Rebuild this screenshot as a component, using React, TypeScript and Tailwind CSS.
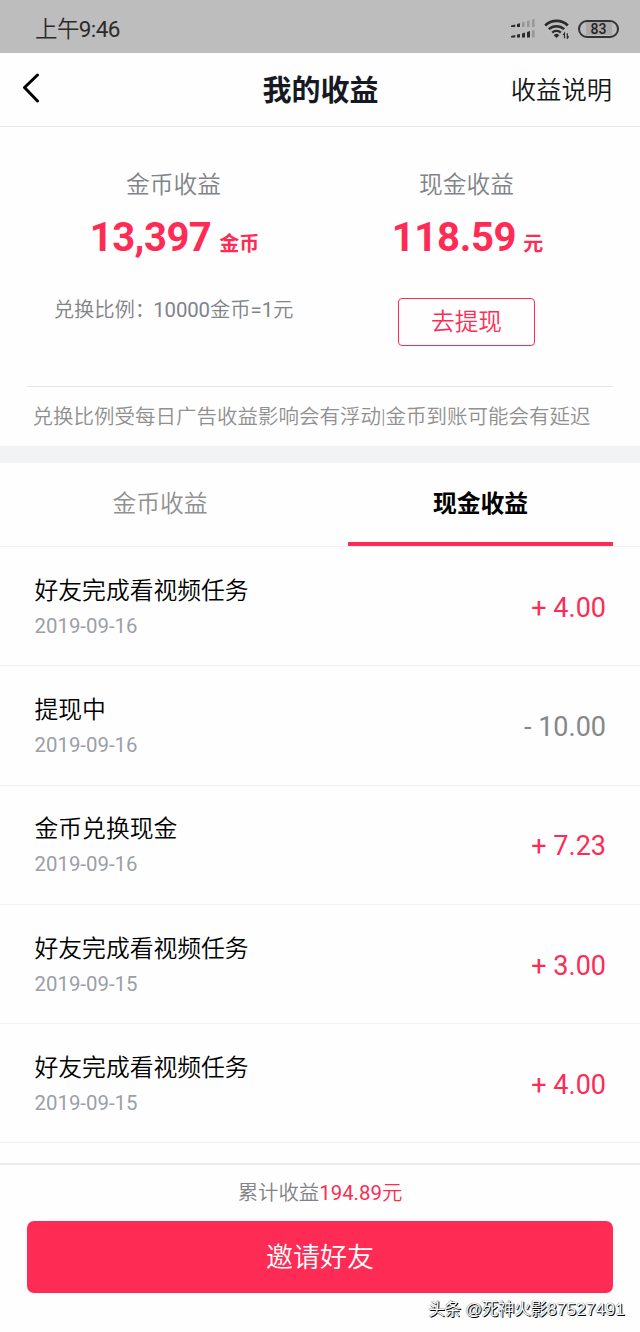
const records = [
  { title: "好友完成看视频任务", date: "2019-09-16", amount: "+ 4.00" },
  { title: "提现中", date: "2019-09-16", amount: "- 10.00" },
  { title: "金币兑换现金", date: "2019-09-16", amount: "+ 7.23" },
  { title: "好友完成看视频任务", date: "2019-09-15", amount: "+ 3.00" },
  { title: "好友完成看视频任务", date: "2019-09-15", amount: "+ 4.00" },
];

function SignalIcon() {
  return (
    <svg width="26" height="20" viewBox="0 0 26 20">
      <g fill="#2b2b2b">
        <path d="M1 6.4 5.2 5.4V8H1z" />
        <path d="M7 5 10 4.2V8H7z" />
        <path d="M1 17 5.2 16V18.6H1z" />
        <path d="M7 15.6 10 15V18.6H7z" />
        <path d="M12 14.4 15 13.4V18.6H12z" />
        <path d="M17 13 20 12V18.6H17z" />
      </g>
      <g fill="#989898">
        <path d="M12 3.4 14.6 2.6V8H12z" />
        <path d="M17 2 19.6 1.2V8H17z" />
        <path d="M22 .8 24.6 0V8H22z" />
        <path d="M22 11.6 24.6 11V18.6H22z" />
      </g>
    </svg>
  );
}

function WifiIcon() {
  return (
    <svg width="26" height="20" viewBox="0 0 26 20" fill="none" stroke="#2b2b2b">
      <path d="M1.2 6.4a16.4 16.4 0 0 1 22.6 0" strokeWidth="2.8" />
      <path d="M4.8 10.2a11.2 11.2 0 0 1 15.4 0" strokeWidth="2.5" />
      <path d="M8.2 13.7a6.2 6.2 0 0 1 8.6 0" strokeWidth="2.3" />
      <path d="M9.7 16.2a4 4 0 0 1 5.6 0L12.5 19z" fill="#2b2b2b" stroke="none" />
      <path d="M20.5 19.2v-5l-1.4 1.8M23.3 14.2v5l1.4-1.8" strokeWidth="1.2" />
    </svg>
  );
}

export default function App() {
  return (
    <div className="flex h-[1332px] w-[640px] flex-col overflow-hidden bg-[#fefefe] font-['Roboto','Noto_Sans_CJK_SC',sans-serif] text-black">
      <header className="flex h-[53px] shrink-0 items-center justify-between bg-[#bdbdbd] pl-[35px] pr-[21px] pt-[4px]">
        <span className="pt-px text-[22.5px] font-[350] leading-[30px] tracking-[-0.6px] text-[#2b2b2b]">上午<span className="font-normal">9:46</span></span>
        <div className="flex items-center">
          <SignalIcon />
          <div className="ml-[8px] flex">
            <WifiIcon />
          </div>
          <div className="ml-[8px] flex h-[18px] w-[41px] items-center justify-center rounded-full border-2 border-[#333]">
            <span className="flex h-[13px] w-[26px] items-center justify-center bg-[#a9a9a9] text-[14px] font-medium leading-none text-[#222]">83</span>
          </div>
        </div>
      </header>

      <nav className="grid h-[74px] shrink-0 grid-cols-[180px_1fr_180px] items-center border-b border-[#e9e9e9] pl-[22px] pr-[21px]">
        <svg className="-mt-[3px]" width="20" height="30" viewBox="0 0 20 30" fill="none" stroke="#000" strokeWidth="3" strokeLinecap="round" strokeLinejoin="round">
          <path d="M15.5 2 2.5 14.5 15.5 28" />
        </svg>
        <h1 className="whitespace-nowrap pt-[2px] text-center text-[29px] font-bold leading-[40px] text-[#161823]">我的收益</h1>
        <span className="pr-[7px] pt-[3px] text-right text-[25.3px] font-[350] leading-[36px] text-[#161616]">收益说明</span>
      </nav>

      <section className="flex h-[319px] shrink-0 flex-col px-[27px]">
        <div className="grid h-[260px] shrink-0 grid-cols-2 border-b border-[#e6e6e6]">
          <div className="flex flex-col items-center pt-[40px]">
            <span className="text-[23.7px] font-[350] leading-[36px] text-[#808388]">金币收益</span>
            <div className="mt-[8px] flex items-baseline pl-[2px] text-[#fe2c55]">
              <span className="text-[40px] font-bold leading-[54px] tracking-[-0.5px]">13,397</span>
              <span className="ml-[8px] text-[20px] font-bold">金币</span>
            </div>
            <span className="mt-[30px] whitespace-nowrap text-[20.4px] font-[350] leading-[30px] tracking-[-0.1px] text-[#808388]">兑换比例<span className="-mr-[2px] inline-block">：</span><span className="font-normal">10000</span>金币<span className="font-normal">=1</span>元</span>
          </div>
          <div className="flex flex-col items-center pt-[40px]">
            <span className="text-[23.7px] font-[350] leading-[36px] text-[#808388]">现金收益</span>
            <div className="mt-[8px] flex items-baseline pl-[2px] text-[#fe2c55]">
              <span className="text-[40px] font-bold leading-[54px] tracking-[-0.3px]">118.59</span>
              <span className="ml-[7px] text-[20px] font-bold">元</span>
            </div>
            <button className="mt-[33px] h-[48px] w-[137px] rounded-[4px] border border-[#fe2c55] pt-[2px] text-[23.7px] font-[350] text-[#fe2c55]">去提现</button>
          </div>
        </div>
        <p className="whitespace-nowrap pl-[5.5px] pt-[15px] text-[20.5px] font-[350] leading-[30px] text-[#909090]">兑换比例受每日广告收益影响会有浮动|金币到账可能会有延迟</p>
      </section>

      <div className="h-[17px] shrink-0 bg-[#f2f3f5]" />

      <div className="grid h-[84px] shrink-0 grid-cols-2 gap-[56px] border-b border-[#f0f0f0] px-[27px] text-center text-[23.8px] leading-[79px]">
        <span className="pl-px pt-[2px] font-[350] text-[#909090]">金币收益</span>
        <span className="h-[83px] border-b-[4px] border-[#fe2c55] pt-[2px] font-bold text-black">现金收益</span>
      </div>

      <main className="h-[616px] shrink-0 overflow-hidden">
        {records.map((record, index) => (
          <div key={index} className="flex h-[119.3px] items-center justify-between border-b border-[#f1f1f1] pl-[34.5px] pr-[34px] pt-[3px]">
            <div className="flex flex-col">
              <span className="text-[23.8px] font-[350] leading-[36px] text-black">{record.title}</span>
              <span className="text-[20.4px] leading-[34px] text-[#9b9fa8]">{record.date}</span>
            </div>
            <span className={record.amount.startsWith("+") ? "pt-px text-[27px] text-[#fe2c55]" : "pt-px text-[27px] text-[#85878b]"}>{record.amount}</span>
          </div>
        ))}
      </main>

      <footer className="flex h-[169px] shrink-0 flex-col items-center border-t-2 border-[#ececec]">
        <p className="mt-[13px] text-[20.4px] font-[350] leading-[30px] text-[#808388]">
          累计收益<span className="text-[#fe2c55]"><span className="font-normal">194.89</span>元</span>
        </p>
        <button className="mt-[13px] h-[72px] w-[586px] rounded-[7px] bg-[#fe2c55] pt-[2px] text-[27px] font-[350] text-white">邀请好友</button>
        <span className="mr-[15px] mt-[4px] self-end font-['Liberation_Sans','Noto_Sans_CJK_SC',sans-serif] text-[16.6px] leading-[24px] tracking-[-0.3px] text-white [text-shadow:1px_1px_0_#000,0_0_1px_#222]">头条 @死神火影<span className="text-[17.3px] tracking-[0.15px]">87527491</span></span>
      </footer>
    </div>
  );
}
